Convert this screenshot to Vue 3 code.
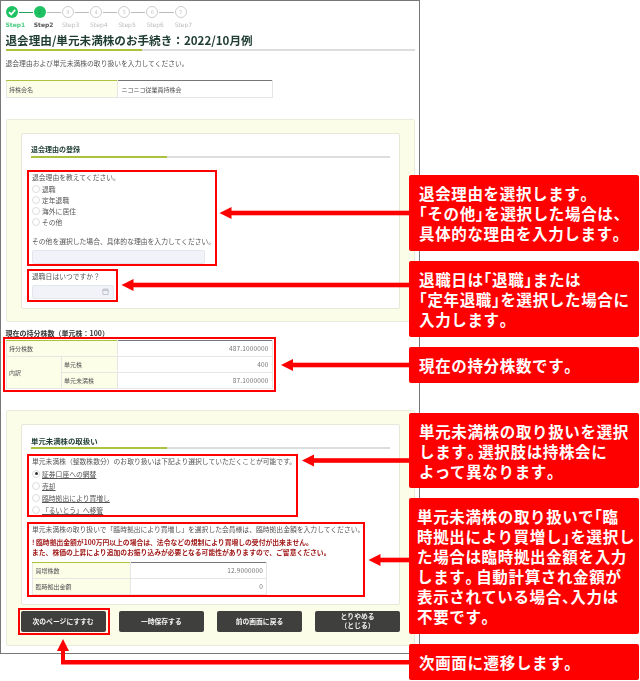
<script setup>
const steps = [1, 2, 3, 4, 5, 6, 7]
const reasons = ['退職', '定年退職', '海外に居住', 'その他']
const handling = [
  { label: '証券口座への網替', on: true },
  { label: '売却', on: false },
  { label: '臨時拠出により買増し', on: false },
  { label: '「るいとう」へ移管', on: false }
]
const buttons = ['一時保存する', '前の画面に戻る']
const callouts = [
  { top: 175, h: 76, lines: ['退会理由を選択します。', '「その他」を選択した場合は、', '具体的な理由を入力します。'] },
  { top: 261, h: 76, lines: ['退職日は「退職」または', '「定年退職」を選択した場合に', '入力します。'] },
  { top: 347, h: 36, lines: ['現在の持分株数です。'] },
  { top: 413, h: 75, lines: ['単元未満株の取り扱いを選択', 'します。選択肢は持株会に', 'よって異なります。'] },
  { top: 498, h: 136, lines: ['単元未満株の取り扱いで「臨', '時拠出により買増し」を選択し', 'た場合は臨時拠出金額を入力', 'します。自動計算され金額が', '表示されている場合、入力は', '不要です。'], tight: true },
  { top: 644, h: 36, lines: ['次画面に遷移します。'] }
]
const arrows = [
  { x: 219.5, y: 213 },
  { x: 121.5, y: 285 },
  { x: 281, y: 365 },
  { x: 302, y: 460.5 },
  { x: 368.5, y: 560 }
]
const parts = (line) => line.split(/([「」、。])/).filter(Boolean)
const isPunct = (p) => /^[「」、。]$/.test(p)
</script>

<template>
  <div class="page">
    <main class="frame">
      <ol class="steps">
        <li v-for="n in steps" :key="n" class="step" :class="{ done: n === 1, now: n === 2 }">
          <div class="track">
            <span class="dot">
              <svg v-if="n === 1" viewBox="0 0 12 12" width="12" height="12">
                <path d="M3 6.2 5.2 8.4 9.2 3.9" fill="none" stroke="#fff" stroke-width="1.7" />
              </svg>
              <template v-else>{{ n }}</template>
            </span>
            <i v-if="n < 7" class="link"></i>
          </div>
          <span class="step-name">Step{{ n }}</span>
        </li>
      </ol>

      <h1 class="title">退会理由/単元未満株のお手続き：2022/10月例</h1>
      <p class="lead">退会理由および単元未満株の取り扱いを入力してください。</p>

      <table class="tbl tbl-name">
        <colgroup><col class="w111" /><col /></colgroup>
        <tbody>
          <tr><th>持株会名</th><td class="left">ニコニコ従業員持株会</td></tr>
        </tbody>
      </table>

      <section class="panel panel-a">
        <div class="card">
          <h2 class="sub">退会理由の登録</h2>
          <div class="mark mark-reason">
            <p class="q">退会理由を教えてください。</p>
            <label v-for="r in reasons" :key="r" class="radio"><i class="ring"></i>{{ r }}</label>
            <p class="q q-other">その他を選択した場合、具体的な理由を入力してください。</p>
            <div class="field field-wide"></div>
          </div>
          <div class="mark mark-date">
            <p class="q">退職日はいつですか？</p>
            <div class="field field-date">
              <svg viewBox="0 0 8 8" width="7" height="7">
                <path d="M1 1.5h6v6H1zM1 3h6M2.5.5v1.5M5.5.5v1.5" fill="none" stroke="#b5bcc0" stroke-width=".9" />
              </svg>
            </div>
          </div>
        </div>
      </section>

      <h3 class="hold">現在の持分株数（単元株：100）</h3>
      <div class="mark mark-hold">
        <table class="tbl tbl-hold">
          <colgroup><col class="w55" /><col class="w56" /><col /></colgroup>
          <tbody>
            <tr><th colspan="2">持分株数</th><td>487.1000000</td></tr>
            <tr><th rowspan="2">内訳</th><th>単元株</th><td>400</td></tr>
            <tr><th>単元未満株</th><td>87.1000000</td></tr>
          </tbody>
        </table>
      </div>

      <section class="panel panel-b">
        <div class="card card-b">
          <h2 class="sub sub-b">単元未満株の取扱い</h2>
          <div class="mark mark-handle">
            <p class="q">単元未満株（整数株数分）のお取り扱いは下記より選択していただくことが可能です。</p>
            <label v-for="h in handling" :key="h.label" class="radio radio-b">
              <i class="ring" :class="{ on: h.on }"></i><u>{{ h.label }}</u>
            </label>
          </div>
          <div class="mark mark-amount">
            <p class="q">単元未満株の取り扱いで「臨時拠出により買増し」を選択した会員様は、臨時拠出金額を入力してください。</p>
            <p class="warn">! 臨時拠出金額が100万円以上の場合は、法令などの規制により買増しの受付が出来ません。<br />また、株価の上昇により追加のお振り込みが必要となる可能性がありますので、ご留意ください。</p>
            <table class="tbl tbl-buy">
              <colgroup><col class="w98" /><col /></colgroup>
              <tbody>
                <tr><th>買増株数</th><td>12.9000000</td></tr>
                <tr><th>臨時拠出金額</th><td>0</td></tr>
              </tbody>
            </table>
          </div>
        </div>
        <div class="actions">
          <div class="btn-mark"><button class="btn">次のページにすすむ</button></div>
          <button v-for="b in buttons" :key="b" class="btn">{{ b }}</button>
          <button class="btn">とりやめる<br />（とじる）</button>
        </div>
      </section>
    </main>

    <svg class="arrows" viewBox="0 0 640 681" width="640" height="681">
      <g v-for="a in arrows" :key="a.x" fill="#f00">
        <rect :x="a.x + 10" :y="a.y - 2.3" :width="411 - a.x" height="4.6" />
        <path :d="`M${a.x} ${a.y}l12-6v12z`" />
      </g>
      <path d="M61 650h4v10h344v4.5H61z" fill="#f00" />
      <path d="M63 639l6 12H57z" fill="#f00" />
    </svg>

    <aside
      v-for="c in callouts"
      :key="c.top"
      class="callout"
      :class="{ tight: c.tight }"
      :style="{ top: c.top + 'px', height: c.h + 'px' }"
    >
      <span v-for="l in c.lines" :key="l"><template v-for="(p, i) in parts(l)" :key="i"><b v-if="isPunct(p)" class="punct" :class="{ stop: p === '。' }">{{ p }}</b><template v-else>{{ p }}</template></template></span>
    </aside>
  </div>
</template>

<style>
html, body { background: #fff; }
</style>

<style scoped>
.page {
  position: relative;
  width: 640px;
  height: 681px;
  overflow: hidden;
  font-family: "Noto Sans CJK JP", "Noto Sans", sans-serif;
  font-size: 6.8px;
  line-height: 10px;
  color: #555;
}
p, h1, h2, h3, ol { margin: 0; padding: 0; }

.frame {
  box-sizing: border-box;
  width: 420px;
  height: 654px;
  border: 1px solid #777;
  border-left-width: 1.5px;
  padding: 5px 4px 0 4.5px;
  filter: blur(.25px);
}

.steps { display: flex; list-style: none; }
.step { width: 28.2px; color: #bbb; font: 6px/8px "DejaVu Sans", sans-serif; }
.track { display: flex; align-items: center; height: 12px; }
.dot {
  box-sizing: border-box;
  flex: none;
  width: 12px;
  height: 12px;
  border: 1px solid #ccc;
  border-radius: 50%;
  display: grid;
  place-items: center;
  font-size: 5px;
  color: #c4c4c4;
}
.done .dot, .now .dot { background: #1fc262; border: 0; color: #159a4d; }
.link { flex: 1; height: 1px; background: #bbb; margin: 0 1px; }
.done .link { background: #1fa35a; }
.step-name { display: block; margin-top: 3px; }
.done .step-name { color: #4ccb80; font-weight: 700; }
.now .step-name { color: #555; font-weight: 700; }

.title {
  position: relative;
  margin-top: 2.5px;
  height: 17px;
  border-bottom: 2px solid #ddd;
  font-size: 11.6px;
  line-height: 17px;
  font-weight: 700;
  color: #1f3d33;
  box-sizing: content-box;
}
.title::after, .sub::after {
  content: "";
  position: absolute;
  left: 0;
  bottom: -2px;
  height: 2px;
  background: #abc23d;
}
.title::after { width: 136px; }
.lead { margin-top: 7px; }

.tbl { border-collapse: collapse; table-layout: fixed; font-size: 6px; line-height: 9px; }
.tbl th, .tbl td { border: 1px solid #e6e6e6; padding: 0 3px 0 2.5px; height: 15px; overflow: hidden; white-space: nowrap; }
.tbl th { background: #fcfee8; font-weight: 400; text-align: left; }
.tbl td { text-align: right; font-size: 6.5px; letter-spacing: .15px; color: #777; }
.tbl td.left { text-align: left; padding-left: 4px; font-size: 6px; letter-spacing: 0; color: #555; }
.tbl tr:first-child th { border-top: 1.5px solid #abc23d; }
.tbl tr:first-child td { border-top: 1.5px solid #777; }
.w111 { width: 111px; }
.w55 { width: 55px; }
.w56 { width: 56px; }
.w98 { width: 98px; }
.tbl-name { width: 267px; margin-top: 12.7px; }
.tbl-name th, .tbl-name td { height: 16px; }
.tbl-hold { width: 267px; }
.tbl-buy { width: 235px; }

.panel {
  box-sizing: border-box;
  background: #fbfde8;
  border: 1px solid #e9ebdb;
  border-radius: 2px;
  padding: 13px 14px 0;
}
.panel-a { height: 203px; margin-top: 21px; }
.panel-b { height: 236px; margin-top: 18px; }
.card {
  box-sizing: border-box;
  height: 176px;
  padding: 8.5px 9.5px 0;
  background: #fff;
  border: 1px solid #e6e8d8;
  border-radius: 2px;
}
.card-b { height: 181px; }

.sub {
  position: relative;
  height: 13px;
  border-bottom: 2px solid #ddd;
  font-size: 7px;
  line-height: 13px;
  font-weight: 700;
  color: #1f3d33;
  box-sizing: content-box;
}
.sub::after { width: 136px; }
.sub-b { font-size: 7.4px; }

.mark {
  position: relative;
  box-sizing: border-box;
  border: 2px solid #f00;
  padding: 0 3px;
}
.mark-reason { width: 190px; height: 96px; margin: 12px 0 0 -4px; }
.mark-date { width: 91px; height: 33px; margin: 3px 0 0 -4px; }
.mark-hold { width: 273px; height: 55px; margin: -1px 0 0 -3px; padding: 1px 0 0 1px; }
.mark-handle { width: 271px; height: 63.5px; margin: 5px 0 0 -4px; }
.mark-amount { width: 338px; height: 75px; margin: 5px 0 0 -4px; }

.q { white-space: nowrap; }
.radio { display: flex; align-items: center; height: 11.2px; }
.radio:first-of-type { margin-top: 1.4px; }
.radio-b { height: 12px; }
.radio-b:first-of-type { margin-top: 2.3px; }
.ring {
  box-sizing: border-box;
  width: 8px;
  height: 8px;
  margin-right: 2px;
  border: 1px solid #ddd;
  border-radius: 50%;
  background: #fff;
  display: grid;
  place-items: center;
  flex: none;
}
.ring.on::after {
  content: "";
  width: 3px;
  height: 3px;
  border-radius: 50%;
  background: #333;
}
.q-other { margin-top: 8px; }
.field { background: #f1f3f8; border: 1px solid #e3e6ec; border-radius: 2px; box-sizing: border-box; }
.field-wide { width: 173px; height: 14px; margin-top: 4px; }
.field-date {
  width: 82px;
  height: 14px;
  margin-top: 4px;
  display: flex;
  align-items: center;
  justify-content: flex-end;
  padding-right: 4px;
}

.hold {
  margin-top: 6px;
  font-size: 7px;
  line-height: 10px;
  font-weight: 700;
  color: #333;
}

.warn { margin: 4px 0 4.4px; color: #a01818; font-weight: 700; font-size: 6.8px; line-height: 9.5px; white-space: nowrap; }

.actions {
  display: flex;
  align-items: center;
  gap: 13.2px;
  margin-top: 6px;
}
.btn-mark {
  display: flex;
  border: 2px solid #f00;
  padding: 1px 2px 1px 1px;
  margin: -3px -4px -3px -3px;
}
.btn {
  box-sizing: border-box;
  width: 85.2px;
  height: 20.5px;
  padding: 0;
  border: 0;
  border-radius: 2px;
  background: #3f3f3d;
  color: #f4f4f4;
  font: 700 6.8px/9.5px "Noto Sans CJK JP", sans-serif;
}

.arrows { position: absolute; inset: 0; }

.callout {
  position: absolute;
  left: 409px;
  width: 230px;
  box-sizing: border-box;
  background: #f00;
  border-radius: 2px;
  color: #fff;
  font-size: 15.5px;
  line-height: 20px;
  font-weight: 700;
  padding: 0 0 0 10px;
  letter-spacing: .65px;
  display: flex;
  flex-direction: column;
  justify-content: center;
  white-space: nowrap;
}
.callout.tight { padding-left: 8px; }
.punct { font-weight: 700; font-feature-settings: "halt"; }
.punct.stop { letter-spacing: 3px; }
</style>
